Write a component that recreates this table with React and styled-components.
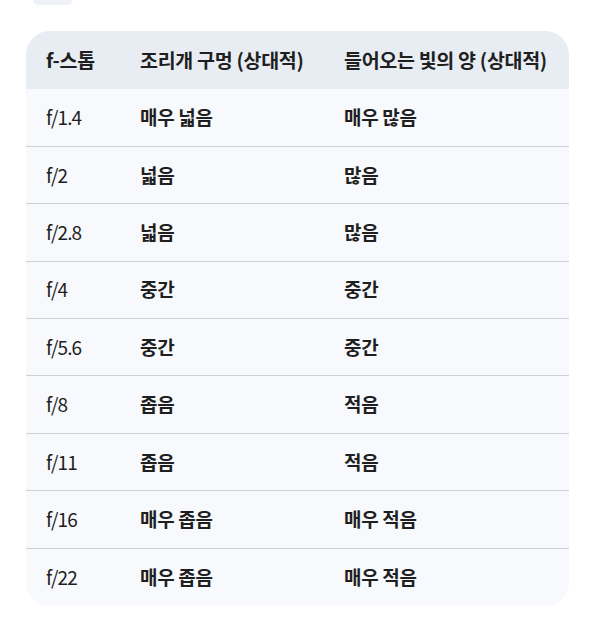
import React from 'react'
import styled, { createGlobalStyle } from 'styled-components'

const GlobalStyle = createGlobalStyle`
    html, body {
        margin: 0;
        padding: 0;
        background: #ffffff;
    }
    body {
        font-family: "Noto Sans CJK KR", "Noto Sans", sans-serif;
        color: #1f1f1f;
    }
    * {
        box-sizing: border-box;
    }
`

const Page = styled.div`
    width: 600px;
    height: 638px;
    overflow: hidden;
`

const TopChip = styled.div`
    margin-left: 33px;
    width: 39px;
    height: 5px;
    background: #eef1f6;
    border-radius: 0 0 14px 14px;
`

const Card = styled.div`
    margin: 26px 31px 0 26px;
    width: 543px;
    border-radius: 24px;
    overflow: hidden;
    background: #f7f9fc;
`

const Table = styled.table`
    width: 100%;
    border-collapse: collapse;
    table-layout: fixed;
`

const HeadRow = styled.tr`
    background: #e8ecf3;
    height: 58px;
`

const Th = styled.th`
    text-align: left;
    font-weight: 700;
    font-size: 19.5px;
    padding: 0 0 2px ${p => p.$first ? 20 : 0}px;
    width: ${p => p.$w ? `${p.$w}px` : 'auto'};
    color: #1f1f1f;
    letter-spacing: -0.3px;
    white-space: nowrap;
`

const Row = styled.tr`
    height: 57.4px;
    border-top: ${p => p.$first ? 'none' : '1px solid #cfd1d5'};
`

const Td = styled.td`
    padding: 0 0 2px ${p => p.$first ? 20 : 0}px;
    font-size: 19px;
    font-weight: ${p => p.$num ? 400 : 700};
    color: #1f1f1f;
    letter-spacing: ${p => p.$num ? '-0.9px' : '-0.3px'};
`

const rows = [
    ['f/1.4', '매우 넓음', '매우 많음'],
    ['f/2', '넓음', '많음'],
    ['f/2.8', '넓음', '많음'],
    ['f/4', '중간', '중간'],
    ['f/5.6', '중간', '중간'],
    ['f/8', '좁음', '적음'],
    ['f/11', '좁음', '적음'],
    ['f/16', '매우 좁음', '매우 적음'],
    ['f/22', '매우 좁음', '매우 적음'],
]

const App = () => {
    return (
        <Page>
            <GlobalStyle />
            <TopChip />
            <Card>
                <Table>
                    <thead>
                        <HeadRow>
                            <Th $first $w={114}>f-스톱</Th>
                            <Th $w={204}>조리개 구멍 (상대적)</Th>
                            <Th>들어오는 빛의 양 (상대적)</Th>
                        </HeadRow>
                    </thead>
                    <tbody>
                        {rows.map((r, i) => (
                            <Row key={r[0]} $first={i === 0}>
                                <Td $first $num>{r[0]}</Td>
                                <Td>{r[1]}</Td>
                                <Td>{r[2]}</Td>
                            </Row>
                        ))}
                    </tbody>
                </Table>
            </Card>
        </Page>
    )
}

export default App
